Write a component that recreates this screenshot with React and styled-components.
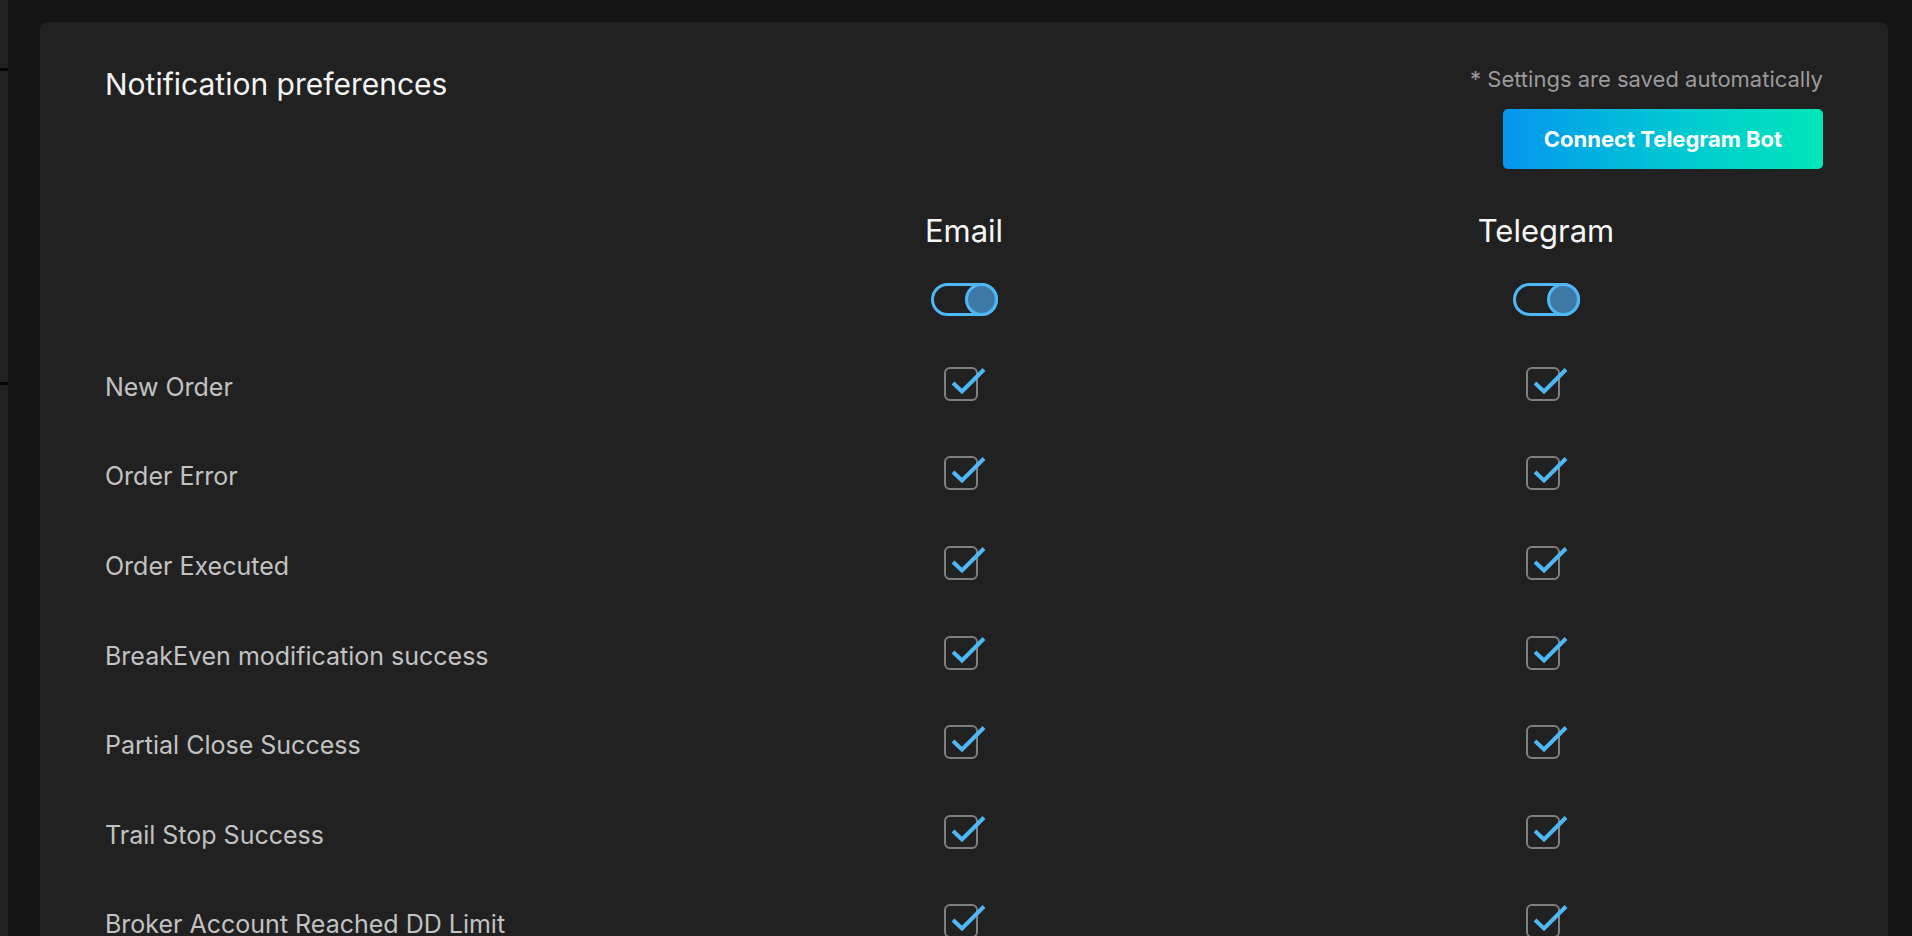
import React, { useState } from 'react';
import styled, { createGlobalStyle } from 'styled-components';

const GlobalStyle = createGlobalStyle`
  html, body {
    margin: 0;
    height: 100%;
    overflow: hidden;
    background: #141414;
  }
  body {
    font-family: Inter, "Open Sans", "Liberation Sans", sans-serif;
  }
  #root {
    height: 100%;
  }
`;

const Page = styled.div`
  display: flex;
  height: 100%;
  background: #141414;
`;

const SideEdge = styled.div`
  width: 8px;
  flex: none;
  background: #212121;
  padding-top: 68px;
  box-sizing: border-box;
`;

const SideDivider = styled.div`
  height: 3px;
  background: #050505;
  margin-bottom: ${p => p.$gap || 0}px;
`;

const Main = styled.main`
  flex: 1;
  padding: 22px 24px 0 32px;
  min-width: 0;
`;

const Card = styled.section`
  background: #212121;
  border-radius: 8px;
  padding: 44px 65px 40px 65px;
`;

const Head = styled.div`
  display: flex;
  justify-content: space-between;
  align-items: flex-start;
`;

const Title = styled.h2`
  margin: 0;
  font-size: 30px;
  line-height: 36px;
  font-weight: 400;
  color: #f4f4f4;
`;

const HeadSide = styled.div`
  display: flex;
  flex-direction: column;
  align-items: flex-end;
`;

const SavedNote = styled.div`
  font-size: 22px;
  line-height: 26px;
  color: #9b9b9b;
`;

const TelegramButton = styled.button`
  margin-top: 17px;
  width: 320px;
  height: 60px;
  border: 0;
  border-radius: 5px;
  background: linear-gradient(90deg, #0596ee 0%, #00c9d2 55%, #00e6b8 100%);
  color: #fff;
  font-family: inherit;
  font-size: 22px;
  font-weight: 700;
  cursor: pointer;
`;

const Table = styled.div`
  margin-top: 44px;
  display: grid;
  grid-template-columns: 568px 582px 582px;
  grid-template-rows: auto;
  grid-auto-rows: 89.6px;
`;

const ChannelHead = styled.div`
  display: flex;
  flex-direction: column;
  align-items: center;
  gap: 34px;
  padding-bottom: 26px;
`;

const ChannelName = styled.div`
  font-size: 31px;
  line-height: 36px;
  color: #f6f6f6;
`;

const Track = styled.button`
  width: 67px;
  height: 33px;
  box-sizing: border-box;
  border: 3px solid #4db8f5;
  border-radius: 17px;
  background: transparent;
  padding: 0;
  display: flex;
  align-items: center;
  justify-content: ${p => (p.$on ? 'flex-end' : 'flex-start')};
  cursor: pointer;
`;

const Thumb = styled.span`
  width: 33px;
  height: 33px;
  margin: -3px;
  box-sizing: border-box;
  border: 3px solid #4db8f5;
  border-radius: 50%;
  background: ${p => (p.$on ? '#3d79a4' : '#2c2c2c')};
`;

const RowLabel = styled.div`
  display: flex;
  align-items: center;
  font-size: 25px;
  line-height: 30px;
  color: #c2c2c2;
  white-space: nowrap;
`;

const Cell = styled.div`
  display: flex;
  align-items: center;
  justify-content: center;
  padding-bottom: 6px;
`;

const CheckWrap = styled.label`
  position: relative;
  width: 40px;
  height: 34px;
  cursor: pointer;
`;

const CheckBox = styled.span`
  display: block;
  width: 34px;
  height: 34px;
  box-sizing: border-box;
  border: 2px solid #7f7f7f;
  border-radius: 6px;
`;

const CheckMark = styled.svg`
  position: absolute;
  left: 0;
  top: 0;
  overflow: visible;
`;

const rows = [
  'New Order',
  'Order Error',
  'Order Executed',
  'BreakEven modification success',
  'Partial Close Success',
  'Trail Stop Success',
  'Broker Account Reached DD Limit',
];

const Toggle = ({ on, onChange }) => (
  <Track $on={on} onClick={() => onChange(!on)}>
    <Thumb $on={on} />
  </Track>
);

const Check = ({ checked, onChange }) => (
  <CheckWrap onClick={() => onChange(!checked)}>
    <CheckBox />
    {checked && (
      <CheckMark width="40" height="34" viewBox="0 0 40 34">
        <polyline points="9,16 18,24.5 40,2.5" fill="none" stroke="#4db8f5" strokeWidth="4" />
      </CheckMark>
    )}
  </CheckWrap>
);

export default function App() {
  const [channels, setChannels] = useState({ email: true, telegram: true });
  const [checks, setChecks] = useState(() =>
    rows.map(() => ({ email: true, telegram: true }))
  );

  const setCheck = (i, key, value) => {
    setChecks(prev => prev.map((r, idx) => (idx === i ? { ...r, [key]: value } : r)));
  };

  return (
    <Page>
      <GlobalStyle />
      <SideEdge>
        <SideDivider $gap={311} />
        <SideDivider />
      </SideEdge>
      <Main>
        <Card>
          <Head>
            <Title>Notification preferences</Title>
            <HeadSide>
              <SavedNote>* Settings are saved automatically</SavedNote>
              <TelegramButton>Connect Telegram Bot</TelegramButton>
            </HeadSide>
          </Head>
          <Table>
            <div />
            <ChannelHead>
              <ChannelName>Email</ChannelName>
              <Toggle on={channels.email} onChange={v => setChannels({ ...channels, email: v })} />
            </ChannelHead>
            <ChannelHead>
              <ChannelName>Telegram</ChannelName>
              <Toggle on={channels.telegram} onChange={v => setChannels({ ...channels, telegram: v })} />
            </ChannelHead>
            {rows.map((name, i) => (
              <React.Fragment key={name}>
                <RowLabel>{name}</RowLabel>
                <Cell>
                  <Check checked={checks[i].email} onChange={v => setCheck(i, 'email', v)} />
                </Cell>
                <Cell>
                  <Check checked={checks[i].telegram} onChange={v => setCheck(i, 'telegram', v)} />
                </Cell>
              </React.Fragment>
            ))}
          </Table>
        </Card>
      </Main>
    </Page>
  );
}
